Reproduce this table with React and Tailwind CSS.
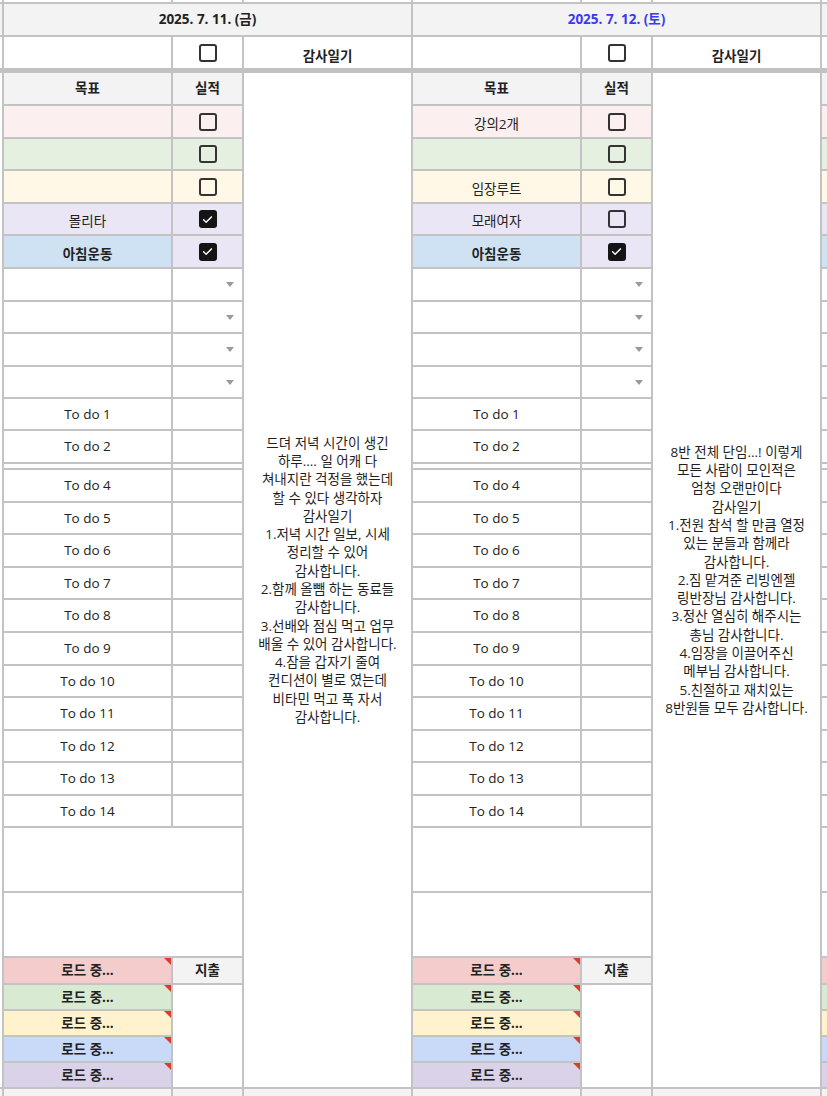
import React from "react";

const cell = "border-r-2 border-b-2 border-[#c3c3c3]";

const goalBg = [
  ["bg-[#fcefef]", "bg-[#fcefef]"],
  ["bg-[#e6f0e0]", "bg-[#e6f0e0]"],
  ["bg-[#fff8e6]", "bg-[#fff8e6]"],
  ["bg-[#eae6f5]", "bg-[#eae6f5]"],
  ["bg-[#cfe2f3]", "bg-[#eae6f5]"],
];
const goalH = ["h-[33px]", "h-[32px]", "h-[33px]", "h-[32px]", "h-[33px]"];
const dropH = ["h-[33px]", "h-[32px]", "h-[33px]", "h-[32px]"];

const todos = [
  { label: "To do 1", h: "h-[32px]" },
  { label: "To do 2", h: "h-[33px]" },
  { label: "", h: "h-[6px]" },
  { label: "To do 4", h: "h-[33px]" },
  { label: "To do 5", h: "h-[32px]" },
  { label: "To do 6", h: "h-[33px]" },
  { label: "To do 7", h: "h-[32px]" },
  { label: "To do 8", h: "h-[33px]" },
  { label: "To do 9", h: "h-[33px]" },
  { label: "To do 10", h: "h-[32px]" },
  { label: "To do 11", h: "h-[33px]" },
  { label: "To do 12", h: "h-[32px]" },
  { label: "To do 13", h: "h-[33px]" },
  { label: "To do 14", h: "h-[32px]" },
];

const loads = [
  { bg: "bg-[#f4cccc]", h: "h-[27px]" },
  { bg: "bg-[#d9ead3]", h: "h-[26px]" },
  { bg: "bg-[#fff2cc]", h: "h-[26px]" },
  { bg: "bg-[#c9daf8]", h: "h-[26px]" },
  { bg: "bg-[#d9d2e9]", h: "h-[26px]" },
];

// edge columns (0 and 3) are only a few pixels wide on screen, so they carry no text
const edge = { ghost: true, date: "", blue: false, goals: ["", "", "", "", ""], checks: [false, false, false, false, false], diary: [] };

const days = [
  edge,
  {
    date: "2025. 7. 11. (금)",
    blue: false,
    goals: ["", "", "", "몰리타", "아침운동"],
    checks: [false, false, false, true, true],
    diary: [
      "드뎌 저녁 시간이 생긴",
      "하루.... 일 어캐 다",
      "쳐내지란 걱정을 했는데",
      "할 수 있다 생각하자",
      "감사일기",
      "1.저녁 시간 일보, 시세",
      "정리할 수 있어",
      "감사합니다.",
      "2.함께 올뺌 하는 동료들",
      "감사합니다.",
      "3.선배와 점심 먹고 업무",
      "배울 수 있어 감사합니다.",
      "4.잠을 갑자기 줄여",
      "컨디션이 별로 였는데",
      "비타민 먹고 푹 자서",
      "감사합니다.",
    ],
  },
  {
    date: "2025. 7. 12. (토)",
    blue: true,
    goals: ["강의2개", "", "임장루트", "모래여자", "아침운동"],
    checks: [false, false, false, false, true],
    diary: [
      "8반 전체 단임...! 이렇게",
      "모든 사람이 모인적은",
      "엄청 오랜만이다",
      "감사일기",
      "1.전원 참석 할 만큼 열정",
      "있는 분들과 함께라",
      "감사합니다.",
      "2.짐 맡겨준 리빙엔젤",
      "링반장님 감사합니다.",
      "3.정산 열심히 해주시는",
      "총님 감사합니다.",
      "4.임장을 이끌어주신",
      "메부님 감사합니다.",
      "5.친절하고 재치있는",
      "8반원들 모두 감사합니다.",
    ],
  },
  edge,
];

function Check({ on }) {
  if (on) {
    return (
      <span className="flex h-[18px] w-[18px] items-center justify-center rounded-[3px] bg-[#141414]">
        <svg viewBox="0 0 16 16" className="h-[13px] w-[13px]">
          <path d="M3.2 8.4l3.1 3 6.5-6.6" stroke="#fff" strokeWidth="1.8" fill="none" strokeLinecap="round" strokeLinejoin="round" />
        </svg>
      </span>
    );
  }
  return <span className="block h-[18px] w-[18px] rounded-[3px] border-2 border-[#333]" />;
}

function Group({ day, first }) {
  const t = (s) => (day.ghost ? "" : s);
  return (
    <div className={`flex w-[409px] shrink-0 flex-col ${first ? "-ml-[405px]" : ""}`}>
      <div className="flex h-[4px]">
        <div className={`w-[169px] bg-white ${cell}`} />
        <div className={`w-[71px] bg-white ${cell}`} />
        <div className={`w-[169px] bg-white ${cell}`} />
      </div>

      <div
        className={`flex h-[33px] items-center justify-center bg-[#f3f3f3] text-[13.5px] font-bold ${cell} ${
          day.blue ? "text-[#3a3aee]" : "text-[#222]"
        }`}
      >
        {day.date}
      </div>

      <div className="flex h-[31px]">
        <div className="w-[169px] border-r-2 border-[#c3c3c3] bg-white" />
        <div className="flex w-[71px] items-center justify-center border-r-2 border-[#c3c3c3] bg-white">
          {!day.ghost && <Check on={false} />}
        </div>
        <div className="flex w-[169px] items-end justify-center border-r-2 border-[#c3c3c3] bg-white pb-[2px] text-[13.5px] font-bold text-[#222]">
          {t("감사일기")}
        </div>
      </div>

      <div className="h-[5px] bg-[#c2c2c2]" />

      <div className="flex">
        <div className="flex w-[240px] flex-col">
          <div className="flex h-[33px] bg-[#f3f3f3] text-[13.5px] font-bold text-[#222]">
            <div className={`flex w-[169px] items-center justify-center ${cell}`}>{t("목표")}</div>
            <div className={`flex w-[71px] items-center justify-center ${cell}`}>{t("실적")}</div>
          </div>

          {day.goals.map((g, i) => (
            <div key={i} className={`flex ${goalH[i]}`}>
              <div
                className={`flex w-[169px] items-end justify-center pb-[3px] text-[13.5px] text-[#222] ${goalBg[i][0]} ${cell} ${
                  i === 4 ? "font-bold" : ""
                }`}
              >
                {g}
              </div>
              <div className={`flex w-[71px] items-center justify-center ${goalBg[i][1]} ${cell}`}>
                {!day.ghost && <Check on={day.checks[i]} />}
              </div>
            </div>
          ))}

          {dropH.map((h, i) => (
            <div key={i} className={`flex ${h}`}>
              <div className={`w-[169px] bg-white ${cell}`} />
              <div className={`flex w-[71px] items-center justify-end bg-white pr-[8px] ${cell}`}>
                <span className="border-x-[4px] border-t-[5px] border-x-transparent border-t-[#9a9a9a]" />
              </div>
            </div>
          ))}

          {todos.map((row, i) => (
            <div key={i} className={`flex ${row.h}`}>
              <div className={`flex w-[169px] items-center justify-center bg-white text-[13.5px] text-[#222] ${cell}`}>
                {t(row.label)}
              </div>
              <div className={`w-[71px] bg-white ${cell}`} />
            </div>
          ))}

          <div className={`h-[65px] bg-white ${cell}`} />
          <div className={`h-[65px] bg-white ${cell}`} />

          <div className="flex">
            <div className="flex w-[169px] flex-col">
              {loads.map((l, i) => (
                <div
                  key={i}
                  className={`relative flex items-center justify-center text-[13.5px] font-bold text-[#222] ${l.h} ${l.bg} ${cell}`}
                >
                  {t("로드 중...")}
                  <span className="absolute right-0 top-0 border-l-[7px] border-t-[7px] border-l-transparent border-t-[#dc3b2e]" />
                </div>
              ))}
            </div>
            <div className="flex w-[71px] flex-col">
              <div className={`flex h-[27px] items-center justify-center bg-[#f3f3f3] text-[13.5px] font-bold text-[#222] ${cell}`}>
                {t("지출")}
              </div>
              <div className={`h-[104px] bg-white ${cell}`} />
            </div>
          </div>
        </div>

        <div className={`flex w-[169px] flex-col items-center justify-center bg-white text-center text-[13.5px] leading-[18.3px] text-[#1f1f1f] ${cell}`}>
          {day.diary.map((line, i) => (
            <div key={i} className="whitespace-nowrap">
              {line}
            </div>
          ))}
        </div>
      </div>

      <div className="flex h-[7px] bg-[#f3f3f3]">
        <div className="w-[169px] border-r-2 border-[#c3c3c3]" />
        <div className="w-[71px] border-r-2 border-[#c3c3c3]" />
        <div className="w-[169px] border-r-2 border-[#c3c3c3]" />
      </div>
    </div>
  );
}

export default function App() {
  return (
    <div className="h-[1096px] w-[827px] overflow-hidden bg-white font-['Open_Sans','Noto_Sans_CJK_KR',sans-serif]">
      <div className="flex">
        {days.map((day, i) => (
          <Group key={i} day={day} first={i === 0} />
        ))}
      </div>
    </div>
  );
}
